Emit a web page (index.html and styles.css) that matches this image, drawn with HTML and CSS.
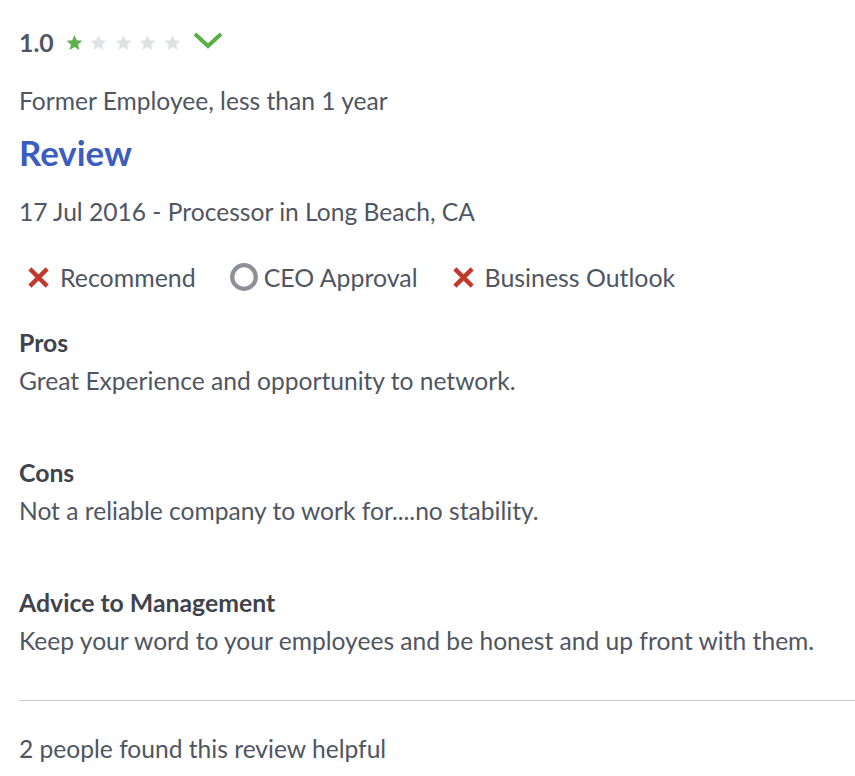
FILE: index.html
```html
<!DOCTYPE html>
<html>
<head>
<meta charset="utf-8">
<link rel="stylesheet" href="styles.css">
</head>
<body>
<div class="review">
  <div class="rating-row">
    <span class="rating">1.0</span>
    <span class="stars">
      <svg class="star on" viewBox="0 0 24 24"><path d="M12 2.5l2.9 6.6 7.1.6-5.4 4.7 1.6 7-6.2-3.7-6.2 3.7 1.6-7L2 9.7l7.1-.6z"/></svg>
      <svg class="star" viewBox="0 0 24 24"><path d="M12 2.5l2.9 6.6 7.1.6-5.4 4.7 1.6 7-6.2-3.7-6.2 3.7 1.6-7L2 9.7l7.1-.6z"/></svg>
      <svg class="star" viewBox="0 0 24 24"><path d="M12 2.5l2.9 6.6 7.1.6-5.4 4.7 1.6 7-6.2-3.7-6.2 3.7 1.6-7L2 9.7l7.1-.6z"/></svg>
      <svg class="star" viewBox="0 0 24 24"><path d="M12 2.5l2.9 6.6 7.1.6-5.4 4.7 1.6 7-6.2-3.7-6.2 3.7 1.6-7L2 9.7l7.1-.6z"/></svg>
      <svg class="star" viewBox="0 0 24 24"><path d="M12 2.5l2.9 6.6 7.1.6-5.4 4.7 1.6 7-6.2-3.7-6.2 3.7 1.6-7L2 9.7l7.1-.6z"/></svg>
    </span>
    <svg class="chevron" viewBox="0 0 32 20"><path d="M3 4L16 16 29 4" fill="none" stroke="#5aaf47" stroke-width="4"/></svg>
  </div>
  <div class="author">Former Employee, less than 1 year</div>
  <h2 class="title">Review</h2>
  <div class="meta">17 Jul 2016 - Processor in Long Beach, CA</div>
  <div class="badges">
    <span class="badge"><svg class="icon" viewBox="0 0 24 24"><path d="M3 3l18 18M21 3L3 21" stroke="#c0392b" stroke-width="4.5" fill="none"/></svg>Recommend</span>
    <span class="badge"><svg class="icon ring" viewBox="0 0 28 28"><circle cx="14" cy="14" r="11.8" fill="none" stroke="#8d9096" stroke-width="4.2"/></svg>CEO Approval</span>
    <span class="badge"><svg class="icon" viewBox="0 0 24 24"><path d="M3 3l18 18M21 3L3 21" stroke="#c0392b" stroke-width="4.5" fill="none"/></svg>Business Outlook</span>
  </div>
  <div class="section">
    <div class="label">Pros</div>
    <p class="text">Great Experience and opportunity to network.</p>
  </div>
  <div class="section">
    <div class="label">Cons</div>
    <p class="text">Not a reliable company to work for....no stability.</p>
  </div>
  <div class="section">
    <div class="label">Advice to Management</div>
    <p class="text">Keep your word to your employees and be honest and up front with them.</p>
  </div>
  <div class="divider"></div>
  <div class="helpful">2 people found this review helpful</div>
</div>
</body>
</html>
```
FILE: styles.css
```css
* { box-sizing: border-box; }
body {
  margin: 0;
  background: #fff;
  font-family: Lato, "Open Sans", sans-serif;
  color: #4f5662;
}
.review {
  padding: 24px 0 0 19px;
}
.rating-row {
  display: flex;
  align-items: center;
  height: 36px;
}
.rating {
  font-size: 24.8px;
  font-weight: 700;
  color: #4f5662;
  margin-right: 11px;
}
.stars {
  display: flex;
  gap: 5.6px;
}
.star {
  width: 19px;
  height: 19px;
  fill: #e1e2e6;
}
.star.on { fill: #5fb14d; }
.chevron {
  width: 32px;
  height: 20px;
  margin-left: 10px;
  margin-top: -4px;
}
.author {
  font-size: 24.6px;
  margin-top: 26px;
  line-height: 30px;
}
.title {
  margin: 17px 0 0;
  font-size: 34.8px;
  font-weight: 700;
  color: #3b5cc0;
  line-height: 40px;
}
.meta {
  font-size: 24.6px;
  line-height: 30px;
  margin-top: 24px;
}
.badges {
  display: flex;
  gap: 34px;
  margin-top: 35px;
  padding-left: 8px;
}
.badge {
  display: flex;
  align-items: center;
  font-size: 24.9px;
  line-height: 30px;
}
.icon {
  width: 23px;
  height: 23px;
  margin-right: 10px;
}
.icon.ring {
  width: 28px;
  height: 28px;
  margin-right: 6px;
}
.section {
  margin-top: 36px;
}
.section + .section { margin-top: 62px; }
.label {
  font-size: 24.8px;
  font-weight: 700;
  line-height: 30px;
  color: #3f444c;
}
.text {
  margin: 8px 0 0;
  font-size: 24.6px;
  line-height: 30px;
}
.divider {
  margin-top: 44px;
  border-top: 1px solid #c9cace;
}
.helpful {
  margin-top: 33px;
  font-size: 24.6px;
  line-height: 30px;
}
```
